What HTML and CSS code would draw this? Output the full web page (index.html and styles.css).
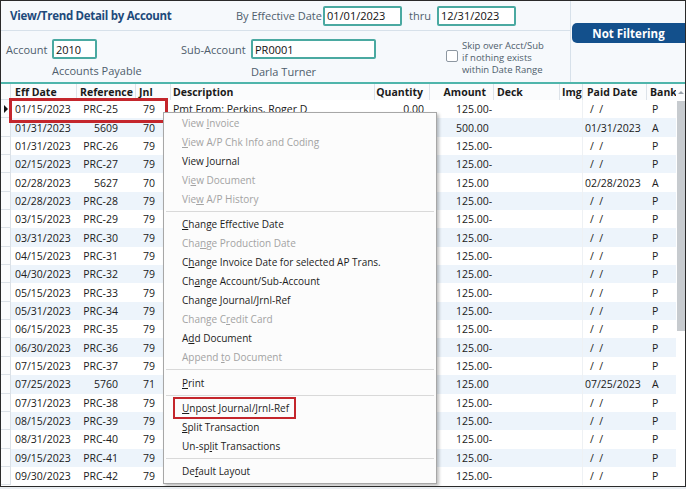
FILE: index.html
```html
<!DOCTYPE html>
<html>
<head>
<meta charset="utf-8">
<link rel="stylesheet" href="styles.css">
</head>
<body>
<div class="window">
  <div class="top">
    <div class="top-left">
      <div class="row1">
        <div class="title">View/Trend Detail by Account</div>
        <div class="lbl lbl-eff">By Effective Date</div>
        <div class="input in-date">01/01/2023</div>
        <div class="lbl lbl-thru">thru</div>
        <div class="input in-date">12/31/2023</div>
      </div>
      <div class="row2">
        <div class="field f-acct">
          <div class="field-line"><span class="lbl lbl-acct">Account</span><span class="input in-acct">2010</span></div>
          <div class="field-sub sub-acct">Accounts Payable</div>
        </div>
        <div class="field f-sub">
          <div class="field-line"><span class="lbl lbl-sub">Sub-Account</span><span class="input in-sub">PR0001</span></div>
          <div class="field-sub sub-sub">Darla Turner</div>
        </div>
        <div class="skip">
          <span class="check"></span>
          <div class="skip-text">
            <div class="skip-line">Skip over Acct/Sub</div>
            <div class="skip-line">if nothing exists</div>
            <div class="skip-line">within Date Range</div>
          </div>
        </div>
      </div>
    </div>
    <div class="top-right">
      <div class="filter">Not Filtering</div>
    </div>
  </div>

  <div class="grid">
    <div class="table">
      <div class="row head">
        <div class="c c-ind"></div>
        <div class="c c-date">Eff Date</div>
        <div class="c c-ref h-left">Reference</div>
        <div class="c c-jnl h-left">Jnl</div>
        <div class="c c-desc">Description</div>
        <div class="c c-qty">Quantity</div>
        <div class="c c-amt h-right">Amount</div>
        <div class="c c-deck">Deck</div>
        <div class="c c-img">Img</div>
        <div class="c c-paid h-paid">Paid Date</div>
        <div class="c c-bank">Bank</div>
      </div>
      <div class="body">
        <div class="row"><div class="c c-ind"><span class="tri"></span></div><div class="c c-date">01/15/2023</div><div class="c c-ref">PRC-25</div><div class="c c-jnl">79</div><div class="c c-desc">Pmt From: Perkins, Roger D</div><div class="c c-qty">0.00</div><div class="c c-amt">125.00-</div><div class="c c-deck"></div><div class="c c-img"></div><div class="c c-paid blank">/ &nbsp;/</div><div class="c c-bank">P</div></div>
        <div class="row alt"><div class="c c-ind"></div><div class="c c-date">01/31/2023</div><div class="c c-ref">5609</div><div class="c c-jnl">70</div><div class="c c-desc"></div><div class="c c-qty"></div><div class="c c-amt">500.00</div><div class="c c-deck"></div><div class="c c-img"></div><div class="c c-paid">01/31/2023</div><div class="c c-bank">A</div></div>
        <div class="row"><div class="c c-ind"></div><div class="c c-date">01/31/2023</div><div class="c c-ref">PRC-26</div><div class="c c-jnl">79</div><div class="c c-desc"></div><div class="c c-qty"></div><div class="c c-amt">125.00-</div><div class="c c-deck"></div><div class="c c-img"></div><div class="c c-paid blank">/ &nbsp;/</div><div class="c c-bank">P</div></div>
        <div class="row alt"><div class="c c-ind"></div><div class="c c-date">02/15/2023</div><div class="c c-ref">PRC-27</div><div class="c c-jnl">79</div><div class="c c-desc"></div><div class="c c-qty"></div><div class="c c-amt">125.00-</div><div class="c c-deck"></div><div class="c c-img"></div><div class="c c-paid blank">/ &nbsp;/</div><div class="c c-bank">P</div></div>
        <div class="row"><div class="c c-ind"></div><div class="c c-date">02/28/2023</div><div class="c c-ref">5627</div><div class="c c-jnl">70</div><div class="c c-desc"></div><div class="c c-qty"></div><div class="c c-amt">125.00</div><div class="c c-deck"></div><div class="c c-img"></div><div class="c c-paid">02/28/2023</div><div class="c c-bank">A</div></div>
        <div class="row alt"><div class="c c-ind"></div><div class="c c-date">02/28/2023</div><div class="c c-ref">PRC-28</div><div class="c c-jnl">79</div><div class="c c-desc"></div><div class="c c-qty"></div><div class="c c-amt">125.00-</div><div class="c c-deck"></div><div class="c c-img"></div><div class="c c-paid blank">/ &nbsp;/</div><div class="c c-bank">P</div></div>
        <div class="row"><div class="c c-ind"></div><div class="c c-date">03/15/2023</div><div class="c c-ref">PRC-29</div><div class="c c-jnl">79</div><div class="c c-desc"></div><div class="c c-qty"></div><div class="c c-amt">125.00-</div><div class="c c-deck"></div><div class="c c-img"></div><div class="c c-paid blank">/ &nbsp;/</div><div class="c c-bank">P</div></div>
        <div class="row alt"><div class="c c-ind"></div><div class="c c-date">03/31/2023</div><div class="c c-ref">PRC-30</div><div class="c c-jnl">79</div><div class="c c-desc"></div><div class="c c-qty"></div><div class="c c-amt">125.00-</div><div class="c c-deck"></div><div class="c c-img"></div><div class="c c-paid blank">/ &nbsp;/</div><div class="c c-bank">P</div></div>
        <div class="row"><div class="c c-ind"></div><div class="c c-date">04/15/2023</div><div class="c c-ref">PRC-31</div><div class="c c-jnl">79</div><div class="c c-desc"></div><div class="c c-qty"></div><div class="c c-amt">125.00-</div><div class="c c-deck"></div><div class="c c-img"></div><div class="c c-paid blank">/ &nbsp;/</div><div class="c c-bank">P</div></div>
        <div class="row alt"><div class="c c-ind"></div><div class="c c-date">04/30/2023</div><div class="c c-ref">PRC-32</div><div class="c c-jnl">79</div><div class="c c-desc"></div><div class="c c-qty"></div><div class="c c-amt">125.00-</div><div class="c c-deck"></div><div class="c c-img"></div><div class="c c-paid blank">/ &nbsp;/</div><div class="c c-bank">P</div></div>
        <div class="row"><div class="c c-ind"></div><div class="c c-date">05/15/2023</div><div class="c c-ref">PRC-33</div><div class="c c-jnl">79</div><div class="c c-desc"></div><div class="c c-qty"></div><div class="c c-amt">125.00-</div><div class="c c-deck"></div><div class="c c-img"></div><div class="c c-paid blank">/ &nbsp;/</div><div class="c c-bank">P</div></div>
        <div class="row alt"><div class="c c-ind"></div><div class="c c-date">05/31/2023</div><div class="c c-ref">PRC-34</div><div class="c c-jnl">79</div><div class="c c-desc"></div><div class="c c-qty"></div><div class="c c-amt">125.00-</div><div class="c c-deck"></div><div class="c c-img"></div><div class="c c-paid blank">/ &nbsp;/</div><div class="c c-bank">P</div></div>
        <div class="row"><div class="c c-ind"></div><div class="c c-date">06/15/2023</div><div class="c c-ref">PRC-35</div><div class="c c-jnl">79</div><div class="c c-desc"></div><div class="c c-qty"></div><div class="c c-amt">125.00-</div><div class="c c-deck"></div><div class="c c-img"></div><div class="c c-paid blank">/ &nbsp;/</div><div class="c c-bank">P</div></div>
        <div class="row alt"><div class="c c-ind"></div><div class="c c-date">06/30/2023</div><div class="c c-ref">PRC-36</div><div class="c c-jnl">79</div><div class="c c-desc"></div><div class="c c-qty"></div><div class="c c-amt">125.00-</div><div class="c c-deck"></div><div class="c c-img"></div><div class="c c-paid blank">/ &nbsp;/</div><div class="c c-bank">P</div></div>
        <div class="row"><div class="c c-ind"></div><div class="c c-date">07/15/2023</div><div class="c c-ref">PRC-37</div><div class="c c-jnl">79</div><div class="c c-desc"></div><div class="c c-qty"></div><div class="c c-amt">125.00-</div><div class="c c-deck"></div><div class="c c-img"></div><div class="c c-paid blank">/ &nbsp;/</div><div class="c c-bank">P</div></div>
        <div class="row alt"><div class="c c-ind"></div><div class="c c-date">07/25/2023</div><div class="c c-ref">5760</div><div class="c c-jnl">71</div><div class="c c-desc"></div><div class="c c-qty"></div><div class="c c-amt">125.00</div><div class="c c-deck"></div><div class="c c-img"></div><div class="c c-paid">07/25/2023</div><div class="c c-bank">A</div></div>
        <div class="row"><div class="c c-ind"></div><div class="c c-date">07/31/2023</div><div class="c c-ref">PRC-38</div><div class="c c-jnl">79</div><div class="c c-desc"></div><div class="c c-qty"></div><div class="c c-amt">125.00-</div><div class="c c-deck"></div><div class="c c-img"></div><div class="c c-paid blank">/ &nbsp;/</div><div class="c c-bank">P</div></div>
        <div class="row alt"><div class="c c-ind"></div><div class="c c-date">08/15/2023</div><div class="c c-ref">PRC-39</div><div class="c c-jnl">79</div><div class="c c-desc"></div><div class="c c-qty"></div><div class="c c-amt">125.00-</div><div class="c c-deck"></div><div class="c c-img"></div><div class="c c-paid blank">/ &nbsp;/</div><div class="c c-bank">P</div></div>
        <div class="row"><div class="c c-ind"></div><div class="c c-date">08/31/2023</div><div class="c c-ref">PRC-40</div><div class="c c-jnl">79</div><div class="c c-desc"></div><div class="c c-qty"></div><div class="c c-amt">125.00-</div><div class="c c-deck"></div><div class="c c-img"></div><div class="c c-paid blank">/ &nbsp;/</div><div class="c c-bank">P</div></div>
        <div class="row alt"><div class="c c-ind"></div><div class="c c-date">09/15/2023</div><div class="c c-ref">PRC-41</div><div class="c c-jnl">79</div><div class="c c-desc"></div><div class="c c-qty"></div><div class="c c-amt">125.00-</div><div class="c c-deck"></div><div class="c c-img"></div><div class="c c-paid blank">/ &nbsp;/</div><div class="c c-bank">P</div></div>
        <div class="row"><div class="c c-ind"></div><div class="c c-date">09/30/2023</div><div class="c c-ref">PRC-42</div><div class="c c-jnl">79</div><div class="c c-desc"></div><div class="c c-qty"></div><div class="c c-amt">125.00-</div><div class="c c-deck"></div><div class="c c-img"></div><div class="c c-paid blank">/ &nbsp;/</div><div class="c c-bank">P</div></div>
      </div>
    </div>
    <div class="vscroll">
      <div class="vs-head"><span class="vs-arrow"></span></div>
      <div class="vs-thumb"></div>
    </div>
  </div>

  <div class="hl hl-row"></div>

  <div class="menu">
    <div class="mi dis"><span>View <u>I</u>nvoice</span></div>
    <div class="mi dis"><span><u>V</u>iew A/P Chk Info and Coding</span></div>
    <div class="mi"><span>View <u>J</u>ournal</span></div>
    <div class="mi dis"><span>Vi<u>e</u>w Document</span></div>
    <div class="mi dis"><span>Vie<u>w</u> A/P History</span></div>
    <div class="sep"></div>
    <div class="mi"><span><u>C</u>hange Effective Date</span></div>
    <div class="mi dis"><span>Cha<u>n</u>ge Production Date</span></div>
    <div class="mi"><span>C<u>h</u>ange Invoice Date for selected AP Trans.</span></div>
    <div class="mi"><span>Ch<u>a</u>nge Account/Sub-Account</span></div>
    <div class="mi"><span>Chan<u>g</u>e Journal/Jrnl-Ref</span></div>
    <div class="mi dis"><span>Change C<u>r</u>edit Card</span></div>
    <div class="mi"><span>A<u>d</u>d Document</span></div>
    <div class="mi dis"><span>Append <u>t</u>o Document</span></div>
    <div class="sep sep-wide"></div>
    <div class="mi"><span><u>P</u>rint</span></div>
    <div class="sep"></div>
    <div class="mi"><span class="hl-item"><u>U</u>npost Journal/Jrnl-Ref</span></div>
    <div class="mi"><span><u>S</u>plit Transaction</span></div>
    <div class="mi"><span>Un-sp<u>l</u>it Transactions</span></div>
    <div class="sep"></div>
    <div class="mi"><span>De<u>f</u>ault Layout</span></div>
  </div>
</div>
</body>
</html>
```

FILE: styles.css
```css
* { box-sizing: border-box; }
html, body { margin: 0; padding: 0; }
body {
  width: 686px;
  height: 489px;
  background: #e9edf1;
  font-family: "Open Sans", "Noto Sans", sans-serif;
  overflow: hidden;
}
.window {
  position: relative;
  width: 686px;
  height: 487px;
  border: 1px solid #2a2a2a;
  background: #ffffff;
  display: flex;
  flex-direction: column;
  overflow: hidden;
}

/* ---------- top panel ---------- */
.top {
  height: 81px;
  display: flex;
  background: #f6f9fc;
}
.top-left {
  width: 569px;
  display: flex;
  flex-direction: column;
}
.row1 {
  height: 30px;
  border-bottom: 1px solid #d7e1ea;
  display: flex;
  align-items: center;
  padding-left: 9px;
}
.title {
  font-weight: 700;
  font-size: 11.5px;
  color: #1d4a7b;
  width: 226px;
  letter-spacing: -0.3px;
  white-space: nowrap;
}
.lbl {
  font-size: 11px;
  color: #4f5e6c;
  white-space: nowrap;
}
.lbl-eff { width: 87px; }
.lbl-thru { margin: 0 7px 0 7px; width: 21px; }
.input {
  display: flex;
  align-items: center;
  height: 20px;
  border: 2px solid #4aa9a1;
  border-radius: 2px;
  background: #ffffff;
  font-size: 11px;
  color: #111;
  padding-left: 2px;
  flex-shrink: 0;
}
.in-date { width: 79px; }
.row2 {
  flex: 1;
  display: flex;
  padding-left: 5px;
  padding-top: 8px;
}
.field { display: flex; flex-direction: column; flex-shrink: 0; }
.f-acct { width: 92px; }
.field-line { display: flex; align-items: center; }
.lbl-acct { width: 46px; flex-shrink: 0; }
.in-acct { width: 45px; }
.f-sub { margin-left: 83px; width: 195px; }
.lbl-sub { width: 70px; flex-shrink: 0; }
.in-sub { width: 125px; }
.field-sub {
  font-size: 11px;
  color: #4f5e6c;
  margin-top: 4px;
  white-space: nowrap;
}
.sub-acct { padding-left: 46px; }
.sub-sub { padding-left: 70px; margin-top: 5px; }
.skip {
  display: flex;
  align-items: center;
  margin-left: 70px;
  height: 37px;
  flex-shrink: 0;
}
.check {
  width: 12px;
  height: 12px;
  border: 1px solid #8d97a1;
  border-radius: 2px;
  background: #fff;
  margin-right: 4px;
  margin-top: -3px;
  flex-shrink: 0;
}
.skip-text {
  display: flex;
  flex-direction: column;
  font-size: 9.5px;
  color: #4f5e6c;
  white-space: nowrap;
}
.skip-line {
  height: 12px;
  line-height: 12px;
}
.top-right {
  flex: 1;
  border-left: 1px solid #d7e1ea;
  padding-top: 22px;
}
.filter {
  height: 20px;
  margin-left: 1px;
  background: #13508c;
  color: #ffffff;
  font-weight: 700;
  font-size: 11.5px;
  display: flex;
  align-items: center;
  justify-content: center;
  border-radius: 5px 0 0 5px;
}

/* ---------- grid ---------- */
.grid {
  flex: 1;
  display: flex;
  border-top: 2px solid #4fb5ab;
  overflow: hidden;
}
.table { width: 675px; }
.row {
  display: grid;
  grid-template-columns: 10px 66px 59px 35px 204px 55px 64px 66px 23px 64px 29px;
  height: 18.35px;
  font-size: 10.5px;
  color: #202020;
}
.row.alt { background: #edf4fb; }
.c {
  display: flex;
  align-items: center;
  white-space: nowrap;
  overflow: hidden;
}
.head {
  height: 16px;
  font-weight: 700;
  background: #fbfcfd;
  color: #1a1a1a;
}
.head .c { border-right: 1px solid #dde3e9; }
.head .c-bank { border-right: none; }
.c-ind {
  border-right: 1px solid #dbe1e7;
  border-bottom: 1px solid #dbe1e7;
  background: #fbfcfd;
}
.tri {
  width: 0; height: 0;
  border-top: 4px solid transparent;
  border-bottom: 4px solid transparent;
  border-left: 4px solid #111;
  margin-left: 3px;
}
.c-date { padding-left: 4px; }
.c-ref { justify-content: flex-end; padding-right: 18px; }
.c-jnl { justify-content: flex-end; padding-right: 16px; }
.head .h-left { justify-content: flex-start; padding-left: 3px; padding-right: 0; }
.c-desc { padding-left: 2px; }
.c-qty { justify-content: flex-end; padding-right: 6px; }
.c-amt { padding-left: 26px; }
.head .h-right { justify-content: flex-end; padding-right: 7px; padding-left: 0; }
.c-deck { padding-left: 3px; }
.c-img { padding-left: 2px; border-right: 1px solid #eef1f4; }
.head .c-img { border-right: 1px solid #dde3e9; }
.c-paid { padding-left: 2px; }
.c-paid.blank { padding-left: 7px; }
.head .h-paid { padding-left: 4px; }
.c-bank { padding-left: 5px; }
.head .c-bank { padding-left: 3px; }

.vscroll {
  flex: 1;
  display: flex;
  flex-direction: column;
}
.vs-head {
  height: 16px;
  display: flex;
  align-items: center;
  justify-content: center;
  background: #fbfcfd;
}
.vs-arrow {
  width: 0; height: 0;
  border-left: 3px solid transparent;
  border-right: 3px solid transparent;
  border-bottom: 3px solid #9aa3ab;
}
.vs-thumb {
  margin-top: 1px;
  margin-left: 1px;
  height: 230px;
  background: #c7cbcf;
}

/* ---------- overlays ---------- */
.hl {
  position: absolute;
  border: 3px solid #c4262c;
}
.hl-row {
  left: 8px;
  top: 97px;
  width: 159px;
  height: 25px;
}

.menu {
  position: absolute;
  left: 162px;
  top: 111px;
  width: 274px;
  height: 372px;
  background: #fcfcfc;
  border: 1px solid #a7a7a7;
  box-shadow: 2px 2px 3px rgba(0,0,0,0.25);
  padding: 0 2px 0 2px;
  font-size: 10px;
  color: #1c1c1c;
}
.mi {
  height: 19px;
  display: flex;
  align-items: center;
  padding-left: 16px;
  white-space: nowrap;
}
.mi.dis { color: #a3a3a3; }
.mi u { text-underline-offset: 1px; }
.sep {
  height: 6px;
  display: flex;
  align-items: center;
}
.sep-wide { height: 7px; }
.sep::before {
  content: "";
  display: block;
  width: 100%;
  border-top: 1px solid #d9d9d9;
}
.hl-item {
  display: inline-flex;
  align-items: center;
  height: 22px;
  margin-left: -9px;
  padding: 0 5px 0 7px;
  border: 2px solid #c4262c;
}
```
